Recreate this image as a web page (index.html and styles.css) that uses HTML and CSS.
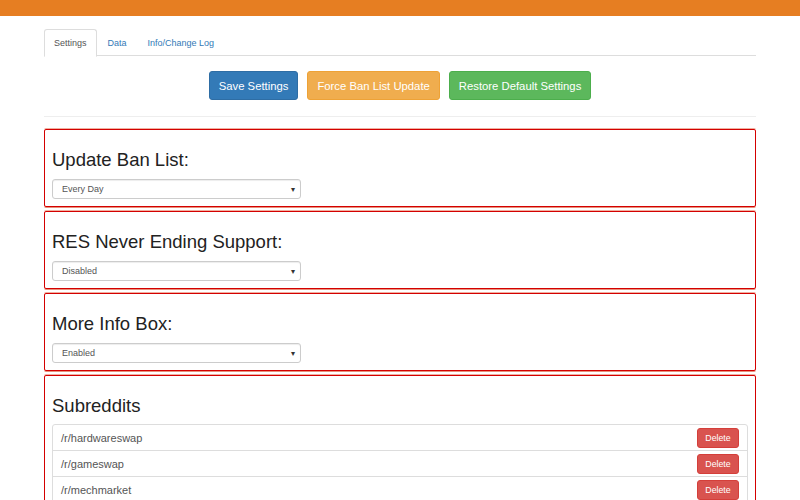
FILE: index.html
```html
<!DOCTYPE html>
<html>
<head>
<meta charset="utf-8">
<link rel="stylesheet" href="styles.css">
</head>
<body>
<div class="topbar"></div>
<div class="container">
  <ul class="tabs">
    <li class="tab active">Settings</li>
    <li class="tab">Data</li>
    <li class="tab">Info/Change Log</li>
  </ul>
  <div class="actions">
    <button class="btn btn-primary">Save Settings</button>
    <button class="btn btn-warning">Force Ban List Update</button>
    <button class="btn btn-success">Restore Default Settings</button>
  </div>
  <hr class="sep">
  <div class="panel">
    <h3>Update Ban List:</h3>
    <div class="select"><span>Every Day</span><span class="caret">▾</span></div>
  </div>
  <div class="panel">
    <h3>RES Never Ending Support:</h3>
    <div class="select"><span>Disabled</span><span class="caret">▾</span></div>
  </div>
  <div class="panel">
    <h3>More Info Box:</h3>
    <div class="select"><span>Enabled</span><span class="caret">▾</span></div>
  </div>
  <div class="panel">
    <h3 class="list-title">Subreddits</h3>
    <ul class="list">
      <li class="row"><span>/r/hardwareswap</span><button class="btn-del">Delete</button></li>
      <li class="row"><span>/r/gameswap</span><button class="btn-del">Delete</button></li>
      <li class="row"><span>/r/mechmarket</span><button class="btn-del">Delete</button></li>
    </ul>
  </div>
</div>
</body>
</html>
```
FILE: styles.css
```css
* { box-sizing: border-box; }
html, body { margin: 0; padding: 0; background: #fff; }
body {
  font-family: "Liberation Sans", Arial, sans-serif;
  color: #333;
  height: 500px;
  overflow: hidden;
}
.topbar { height: 16px; background: #e67e22; }
.container { margin: 0 44px; padding-top: 13px; }
.tabs {
  list-style: none;
  margin: 0;
  padding: 0;
  display: flex;
  border-bottom: 1px solid #ddd;
  height: 27px;
}
.tab {
  font-size: 9px;
  color: #337ab7;
  padding: 0 9px;
  height: 27px;
  line-height: 27px;
  border: 1px solid transparent;
  border-radius: 3px 3px 0 0;
  margin-right: 1px;
}
.tab.active {
  color: #555;
  background: #fff;
  border-color: #ddd #ddd transparent;
  height: 28px;
}
.actions {
  display: flex;
  justify-content: center;
  gap: 9px;
  margin-top: 15px;
}
.btn {
  font-family: "Liberation Sans", Arial, sans-serif;
  font-size: 11.3px;
  color: #fff;
  height: 29px;
  padding: 0 9px;
  border: 1px solid;
  border-radius: 3px;
}
.btn-primary { background: #337ab7; border-color: #2e6da4; }
.btn-warning { background: #f0ad4e; border-color: #eea236; }
.btn-success { background: #5cb85c; border-color: #4cae4c; }
.sep {
  border: 0;
  border-top: 1px solid #eee;
  margin: 16px 0 12px;
}
.panel {
  border: 1px solid #d40000;
  border-radius: 2px;
  box-shadow: 0 1px 0 #e8907a, 0 -1px 0 #f0b0a0;
  padding: 0 7px 7px;
  margin-bottom: 4px;
}
.panel h3 {
  font-weight: normal;
  font-size: 18.5px;
  line-height: 22px;
  margin: 19px 0 8px;
  color: #222;
}
.panel h3.list-title { margin-bottom: 7px; }
.select {
  width: 249px;
  height: 20px;
  border: 1px solid #ccc;
  border-radius: 3px;
  box-shadow: inset 0 1px 1px rgba(0,0,0,0.075);
  display: flex;
  align-items: center;
  justify-content: space-between;
  padding: 0 5px 0 9px;
  font-size: 9px;
  color: #555;
}
.caret { font-size: 8px; color: #333; }
.list {
  list-style: none;
  margin: 0;
  padding: 0;
  border: 1px solid #ddd;
  border-radius: 3px;
}
.row {
  height: 26px;
  display: flex;
  align-items: center;
  justify-content: space-between;
  padding: 0 8px 0 8px;
  border-bottom: 1px solid #ddd;
  font-size: 11px;
  color: #555;
}
.btn-del {
  font-family: "Liberation Sans", Arial, sans-serif;
  font-size: 8.8px;
  color: #fff;
  background: #d9534f;
  border: 1px solid #d43f3a;
  border-radius: 3px;
  height: 20px;
  width: 42px;
  padding: 0;
}
```
